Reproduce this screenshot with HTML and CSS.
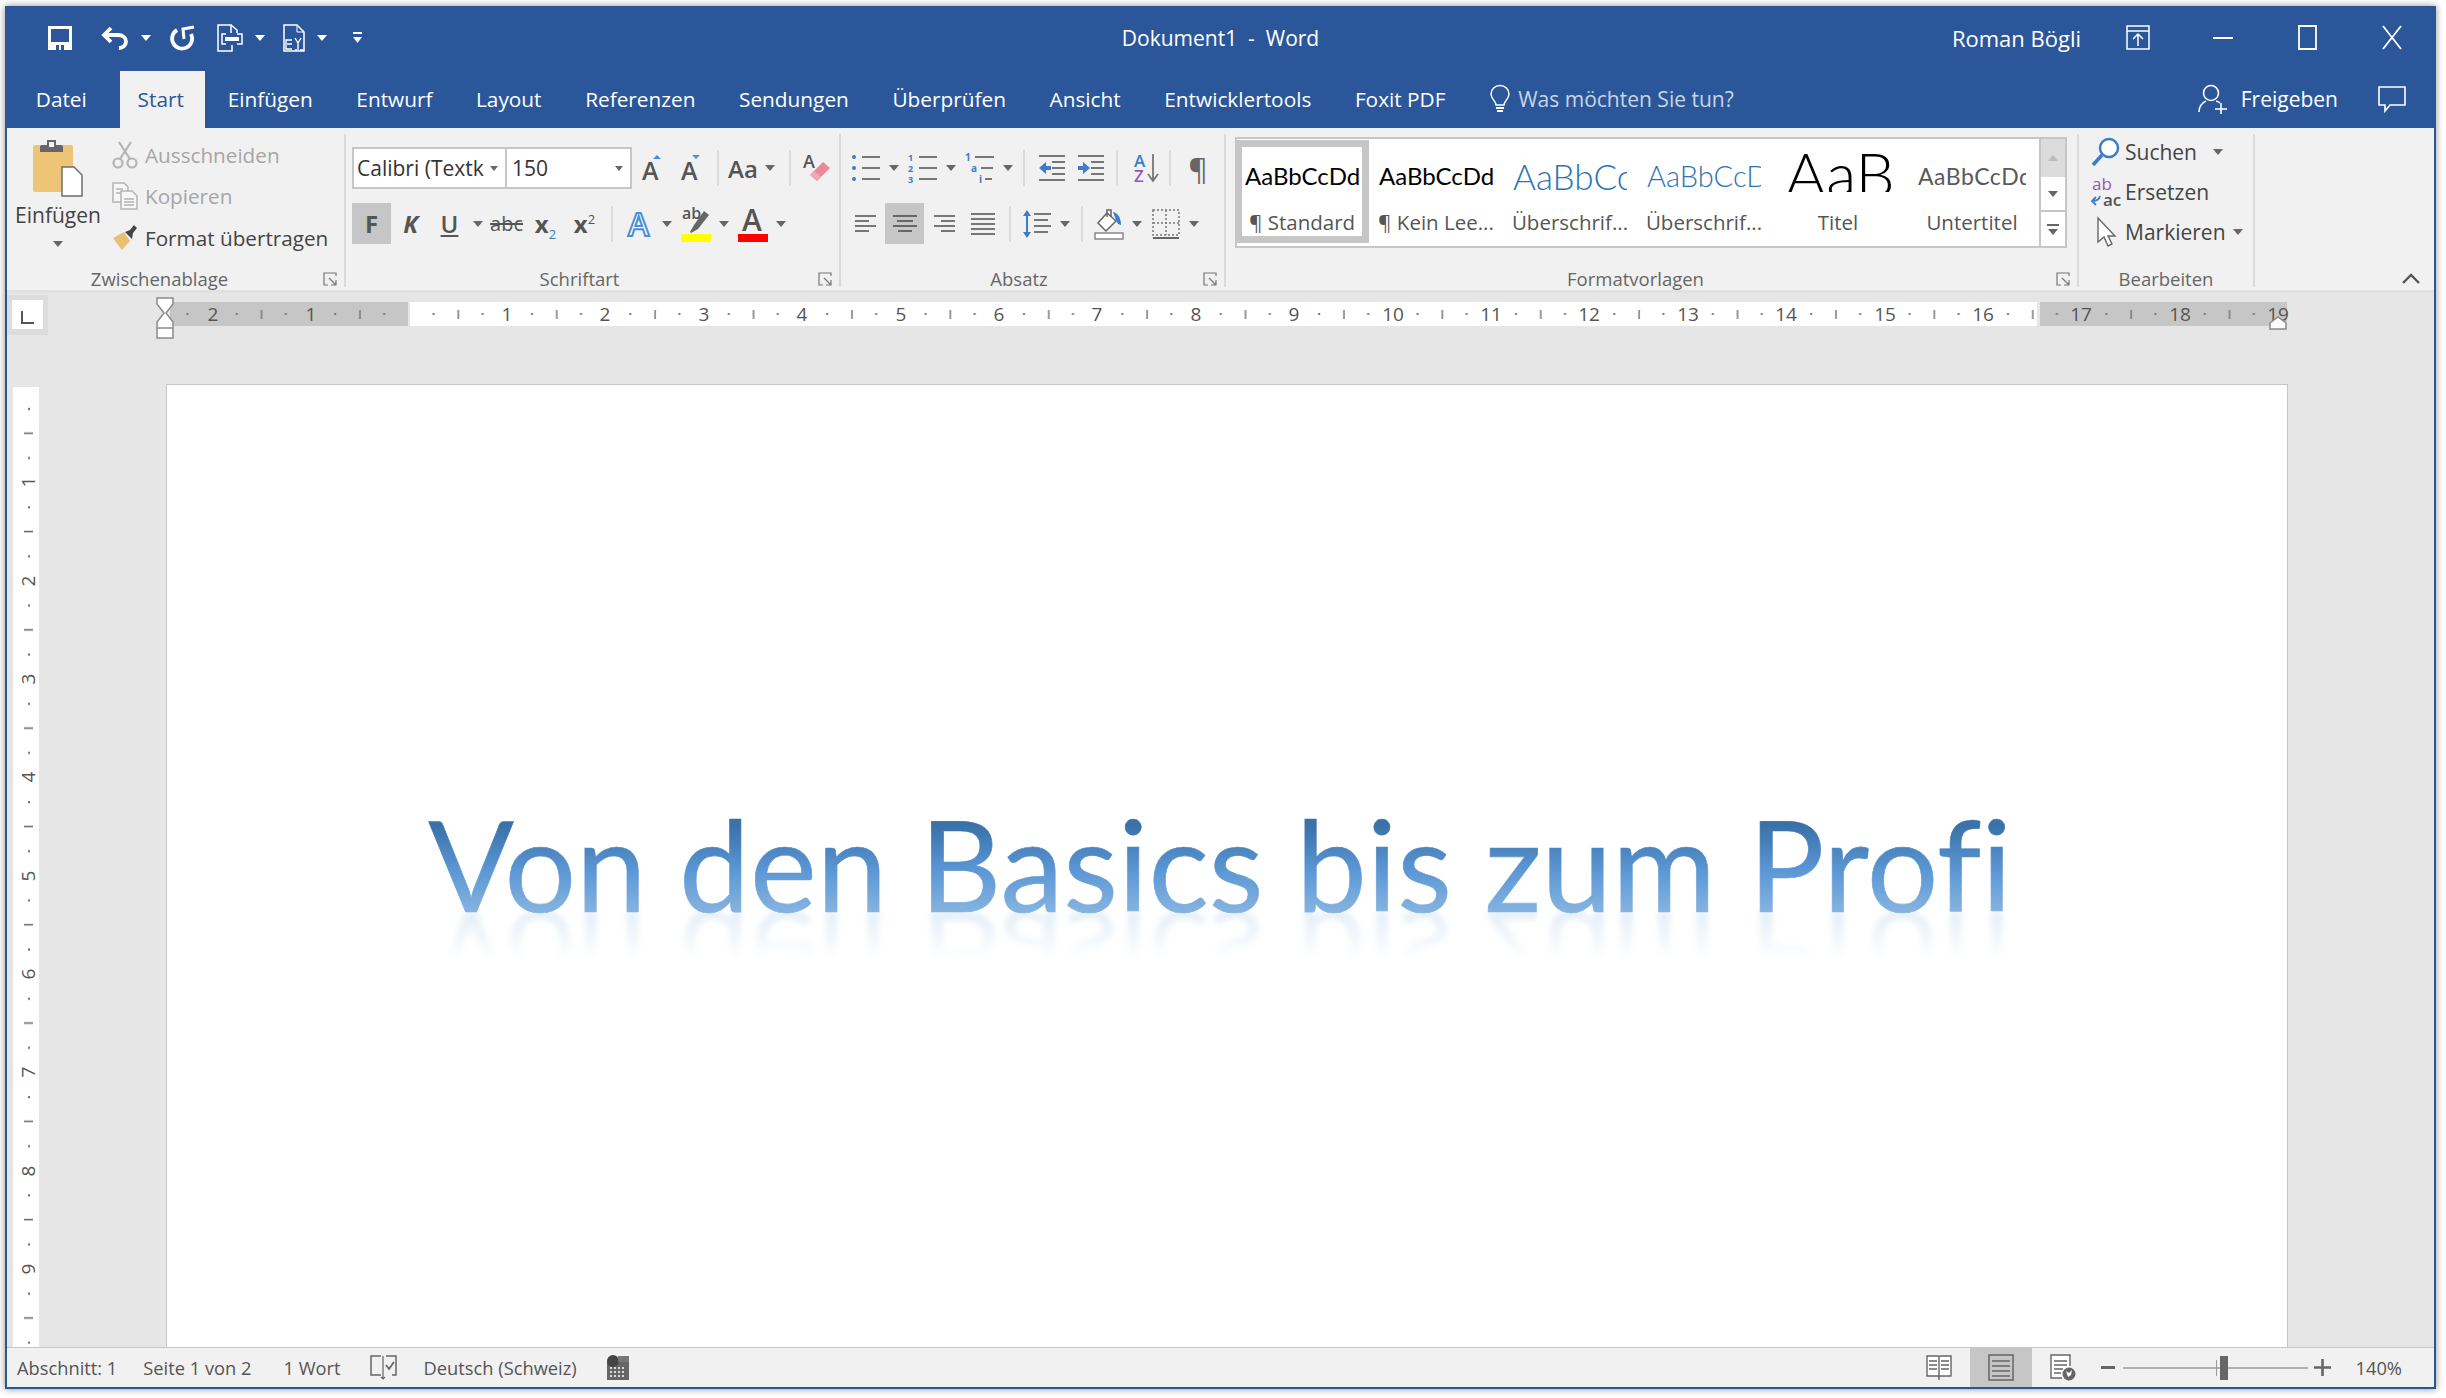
FILE: index.html
```html
<!DOCTYPE html>
<html lang="de">
<head>
  <meta charset="UTF-8">
  <title>Dokument1 - Word</title>
  <link rel="stylesheet" href="styles.css">
</head>
<body>
<div class="window">

  <!-- Titelleiste -->
  <header class="titlebar">
    <div class="qat">
      <svg class="q-save" width="24" height="24" viewBox="0 0 24 24"><path d="M0 0h24v24H0z" fill="#fff"/><path d="M3 3h18v13H3z" fill="#2b579a"/><path d="M8 19h3v5H8zM13 19h3v5h-3z" fill="#2b579a"/></svg>
      <svg class="q-undo" width="27" height="24" viewBox="0 0 27 24"><path d="M9 2 2 9l7 7M3 9h13c5 0 8 3 8 6.500S21 22 17 22" fill="none" stroke="#fff" stroke-width="3.800"/></svg>
      <span class="drop white"></span>
      <svg class="q-redo" width="26" height="25" viewBox="0 0 26 25"><path d="M8 5A10 10 0 1 0 22 9" fill="none" stroke="#fff" stroke-width="3.800"/><path d="M25 2 14 4l1 10" fill="none" stroke="#fff" stroke-width="3"/></svg>
      <svg class="q-touch" width="26" height="28" viewBox="0 0 26 28"><path d="M14 9V1H1v26h14v-6" fill="none" stroke="#fff" stroke-width="1.500"/><path d="M14 1l6 5v3" fill="none" stroke="#fff" stroke-width="1.500"/><path d="M9 10H5v10h4M20 10h5v10h-5" fill="none" stroke="#fff" stroke-width="1.500"/><rect x="8" y="13" width="14" height="4" fill="#fff"/></svg>
      <span class="drop white"></span>
      <svg class="q-doc" width="22" height="28" viewBox="0 0 22 28"><path d="M1 1h13l7 7v19H1z" fill="none" stroke="#fff" stroke-width="1.500"/><path d="M14 1v7h7" fill="none" stroke="#fff"/><path d="M9 16H3v9h6M4 20h5M12 14l3 5 3-5M15 19v7M12 26h2M17 26h3" fill="none" stroke="#fff" stroke-width="1.400"/></svg>
      <span class="drop white"></span>
      <svg class="q-more" width="12" height="12" viewBox="0 0 12 12"><path d="M1 1h9" stroke="#fff" stroke-width="2"/><path d="M1 5h9l-4.500 6z" fill="#fff"/></svg>
    </div>
    <div class="doc-title">Dokument1&nbsp; -&nbsp; Word</div>
    <div class="win-right">
      <span class="user">Roman Bögli</span>
      <button class="win-btn"><svg width="24" height="25" viewBox="0 0 24 25"><path d="M1 1h22v23H1z" fill="none" stroke="#fff" stroke-width="1.500"/><path d="M1 6h22" stroke="#fff" stroke-width="1.500"/><path d="M12 21V10M7 14l5-5 5 5" fill="none" stroke="#fff" stroke-width="1.500"/></svg></button>
      <button class="win-btn"><svg width="20" height="2" viewBox="0 0 20 2"><path d="M0 1h20" stroke="#fff" stroke-width="2"/></svg></button>
      <button class="win-btn"><svg width="19" height="25" viewBox="0 0 19 25"><path d="M1 1h17v23H1z" fill="none" stroke="#fff" stroke-width="1.800"/></svg></button>
      <button class="win-btn"><svg width="20" height="25" viewBox="0 0 20 25"><path d="M1 1l18 23M19 1 1 24" stroke="#fff" stroke-width="1.800"/></svg></button>
    </div>
  </header>

  <!-- Registerkarten -->
  <nav class="tabs">
    <a class="tab tab-file">Datei</a>
    <a class="tab active">Start</a>
    <a class="tab">Einfügen</a>
    <a class="tab">Entwurf</a>
    <a class="tab">Layout</a>
    <a class="tab">Referenzen</a>
    <a class="tab">Sendungen</a>
    <a class="tab">Überprüfen</a>
    <a class="tab">Ansicht</a>
    <a class="tab">Entwicklertools</a>
    <a class="tab">Foxit PDF</a>
    <div class="tell-me">
      <svg width="20" height="28" viewBox="0 0 20 28"><path d="M6 20c0-4-5-6-5-11a9 8.500 0 0 1 18 0c0 5-5 7-5 11z" fill="none" stroke="#fff" stroke-width="1.500"/><path d="M6 23h8M7 26h6" stroke="#fff" stroke-width="2"/></svg>
      <span>Was möchten Sie tun?</span>
    </div>
    <div class="share">
      <svg width="30" height="30" viewBox="0 0 30 30"><circle cx="13" cy="9" r="7.500" fill="none" stroke="#fff" stroke-width="1.600"/><path d="M1 28c0-6 3-9 7-11M18 17c2 .5 3 1 4 2M23 19v11M17 25h12" fill="none" stroke="#fff" stroke-width="1.600"/></svg>
      <span>Freigeben</span>
      <svg class="comment" width="28" height="26" viewBox="0 0 28 26"><path d="M1 1h26v18H12l-5 6v-6H1z" fill="none" stroke="#fff" stroke-width="1.600"/></svg>
    </div>
  </nav>

  <!-- Menüband -->
  <section class="ribbon">

    <div class="group g-clip">
      <div class="clip-body">
        <div class="paste">
          <svg width="50" height="57" viewBox="0 0 50 57"><rect x="0" y="5" width="40" height="47" rx="2" fill="#eec576"/><path d="M7 12V7q0-2 2-2h5V0h9v5h5q2 0 2 2v5z" fill="#666"/><rect x="16" y="2" width="5" height="5" fill="#f1f1f1"/><path d="M29 27h12l8 8v21H29z" fill="#fff" stroke="#6e6e6e" stroke-width="1.500"/></svg>
          <span class="paste-label">Einfügen</span>
          <span class="drop"></span>
        </div>
        <div class="clip-list">
          <div class="clip-row off">
            <svg width="26" height="28" viewBox="0 0 26 28"><g fill="none" stroke="#b4b4b4" stroke-width="2.200"><circle cx="6" cy="22" r="4.500"/><circle cx="20" cy="22" r="4.500"/><path d="M8 18 19 1M18 18 7 1"/></g></svg>
            <span>Ausschneiden</span>
          </div>
          <div class="clip-row off">
            <svg width="26" height="28" viewBox="0 0 26 28"><g fill="#f7f7f7" stroke="#b4b4b4" stroke-width="1.500"><path d="M1 1h11l4 4v15H1z"/><path d="M9 9h11l5 5v13H9z"/><path d="M4 7h7M4 11h4M12 17h10M12 20h10M12 23h10"/></g></svg>
            <span>Kopieren</span>
          </div>
          <div class="clip-row">
            <svg width="26" height="28" viewBox="0 0 26 28"><path d="M1 14 12 8l6 9-8 9q-5-6-9-12" fill="#e9bf75"/><path d="m13 8 5-2 4-5 3 3-4 5-1 6z" fill="#444"/></svg>
            <span>Format übertragen</span>
          </div>
        </div>
      </div>
      <div class="group-label">Zwischenablage</div>
      <svg class="launcher" width="14" height="14" viewBox="0 0 14 14"><path d="M13 4V1H1v12h4M6 6l7 7M13 8v5H8" fill="none" stroke="#777" stroke-width="1.200"/></svg>
    </div>

    <div class="group g-font">
      <div class="row first">
        <div class="combo">
          <div class="combo-name"><span>Calibri (Textk</span><i class="drop small"></i></div>
          <div class="combo-size"><span>150</span><i class="drop small"></i></div>
        </div>
        <button class="btn grow"><svg width="24" height="26" viewBox="0 0 24 26"><text x="0" y="25" class="ico-text" font-size="25">A</text><path d="M11 4l4-4 4 4z" fill="#4a8fd6"/></svg></button>
        <button class="btn grow"><svg width="24" height="26" viewBox="0 0 24 26"><text x="0" y="25" class="ico-text" font-size="25">A</text><path d="M11 0h8l-4 4z" fill="#4a8fd6"/></svg></button>
        <span class="sep"></span>
        <button class="btn case">Aa</button><span class="drop"></span>
        <span class="sep"></span>
        <button class="btn"><svg width="28" height="30" viewBox="0 0 28 30"><text x="0" y="15" class="ico-text" font-size="18">A</text><path d="m7 22 13-13 7 6-13 13z" fill="#e98a9c"/><path d="m7 22 4-4 7 6-4 4z" fill="#f0a8b6"/></svg></button>
      </div>
      <div class="row">
        <button class="btn on fmt-bold">F</button>
        <button class="btn fmt-italic">K</button>
        <button class="btn fmt-under">U</button><span class="drop"></span>
        <button class="btn fmt-strike">abc</button>
        <button class="btn fmt-sub"><span>x<sub>2</sub></span></button>
        <button class="btn fmt-sup"><span>x<sup>2</sup></span></button>
        <span class="sep"></span>
        <button class="btn"><svg width="26" height="28" viewBox="0 0 26 28"><text x="2" y="26" font-size="32" class="ico-effect">A</text></svg></button><span class="drop"></span>
        <button class="btn"><svg width="30" height="36" viewBox="0 0 30 36"><text x="1" y="13" class="ico-text" font-size="16">ab</text><path d="m9 26 4-7 10-14 5 4-11 14-7 4z" fill="#666"/><rect y="28" width="30" height="8" fill="#ffff00"/></svg></button><span class="drop"></span>
        <button class="btn"><svg width="30" height="36" viewBox="0 0 30 36"><text x="4" y="25" class="ico-text" font-size="30">A</text><rect y="28" width="30" height="8" fill="#f00"/></svg></button><span class="drop"></span>
      </div>
      <div class="group-label">Schriftart</div>
      <svg class="launcher" width="14" height="14" viewBox="0 0 14 14"><path d="M13 4V1H1v12h4M6 6l7 7M13 8v5H8" fill="none" stroke="#777" stroke-width="1.200"/></svg>
    </div>

    <div class="group g-para">
      <div class="row first">
        <button class="btn"><svg width="30" height="28" viewBox="0 0 30 28"><g fill="#3d7cc9"><circle cx="3" cy="3" r="2"/><circle cx="3" cy="14" r="2"/><circle cx="3" cy="25" r="2"/></g><path d="M11 3h18M11 14h18M11 25h18" stroke="#777" stroke-width="2"/></svg></button><span class="drop"></span>
        <button class="btn"><svg width="30" height="30" viewBox="0 0 30 30"><g class="ico-num" font-size="9"><text x="0" y="8">1</text><text x="0" y="19">2</text><text x="0" y="30">3</text></g><path d="M11 4h18M11 15h18M11 26h18" stroke="#777" stroke-width="2"/></svg></button><span class="drop"></span>
        <button class="btn"><svg width="30" height="30" viewBox="0 0 30 30"><g class="ico-num" font-size="10"><text x="0" y="8">1</text><text x="6" y="19">a</text><text x="14" y="30">i</text></g><path d="M10 4h19M16 15h12M20 26h7" stroke="#777" stroke-width="2"/></svg></button><span class="drop"></span>
        <span class="sep"></span>
        <button class="btn"><svg width="28" height="26" viewBox="0 0 28 26"><path d="M1 1h26M14 7h13M14 13h13M14 19h13M1 25h26" stroke="#777" stroke-width="2"/><path d="M1 13l7-6v4h5v4H8v4z" fill="#3d7cc9"/></svg></button>
        <button class="btn"><svg width="28" height="26" viewBox="0 0 28 26"><path d="M1 1h26M14 7h13M14 13h13M14 19h13M1 25h26" stroke="#777" stroke-width="2"/><path d="M13 13 6 7v4H1v4h5v4z" fill="#3d7cc9"/></svg></button>
        <span class="sep"></span>
        <button class="btn sort"><svg width="26" height="30" viewBox="0 0 26 30"><text x="0" y="14" font-size="17" class="ico-az a">A</text><text x="0" y="29" font-size="17" class="ico-az z">Z</text><path d="M19 1v26M14 21l5 7 5-7" fill="none" stroke="#777" stroke-width="1.800"/></svg></button>
        <span class="sep tight"></span>
        <button class="btn pilcrow">¶</button>
      </div>
      <div class="row">
        <button class="btn"><svg width="22" height="20" viewBox="0 0 22 20"><path d="M0 2h21M0 7h14M0 12h21M0 17h14" stroke="#777" stroke-width="2"/></svg></button>
        <button class="btn on"><svg width="24" height="20" viewBox="0 0 24 20"><path d="M0 2h24M4 7h16M0 12h24M5 17h14" stroke="#666" stroke-width="2"/></svg></button>
        <button class="btn"><svg width="22" height="20" viewBox="0 0 22 20"><path d="M1 2h21M8 7h14M1 12h21M8 17h14" stroke="#777" stroke-width="2"/></svg></button>
        <button class="btn"><svg width="24" height="24" viewBox="0 0 24 24"><path d="M0 2h24M0 7h24M0 12h24M0 17h24M0 22h24" stroke="#777" stroke-width="2"/></svg></button>
        <span class="sep"></span>
        <button class="btn"><svg width="28" height="30" viewBox="0 0 28 30"><path d="M11 5h17M11 11h14M11 17h17M11 23h14" stroke="#777" stroke-width="2"/><path d="M4 1 0 7h3v16H0l4 6 4-6H5V7h3z" fill="#3d7cc9"/></svg></button><span class="drop"></span>
        <span class="sep"></span>
        <button class="btn"><svg width="30" height="32" viewBox="0 0 30 32"><path d="M13 5 4 15l8 8 10-10z" fill="#fff" stroke="#666" stroke-width="1.500"/><path d="M13 9V2h4v7" fill="none" stroke="#666" stroke-width="1.500"/><path d="M19 4c5 1 8 6 8 13l-3-1-2-4z" fill="#3d7cc9"/><rect x="1" y="25" width="28" height="6" fill="#fff" stroke="#888" stroke-width="1.500"/></svg></button><span class="drop"></span>
        <button class="btn"><svg width="28" height="30" viewBox="0 0 28 30"><path d="M1 1h26v25H1zM14 1v25M1 14h26" fill="none" stroke="#777" stroke-width="1.500" stroke-dasharray="2 2"/><path d="M1 29h26" stroke="#666" stroke-width="2"/></svg></button><span class="drop"></span>
      </div>
      <div class="group-label">Absatz</div>
      <svg class="launcher" width="14" height="14" viewBox="0 0 14 14"><path d="M13 4V1H1v12h4M6 6l7 7M13 8v5H8" fill="none" stroke="#777" stroke-width="1.200"/></svg>
    </div>

    <div class="group g-styles">
      <div class="gallery">
        <div class="gallery-items">
          <div class="style-item selected"><div class="preview">AaBbCcDd</div><div class="style-name">¶ Standard</div></div>
          <div class="style-item"><div class="preview">AaBbCcDd</div><div class="style-name">¶ Kein Lee...</div></div>
          <div class="style-item"><div class="preview h1">AaBbCcDd</div><div class="style-name">Überschrif...</div></div>
          <div class="style-item"><div class="preview h2">AaBbCcDd</div><div class="style-name">Überschrif...</div></div>
          <div class="style-item"><div class="preview title">AaB</div><div class="style-name">Titel</div></div>
          <div class="style-item"><div class="preview sub">AaBbCcDd</div><div class="style-name">Untertitel</div></div>
        </div>
        <div class="gallery-scroll">
          <div class="scroll-cell up"><i class="caret-up"></i></div>
          <div class="scroll-cell down"><i class="caret-down"></i></div>
          <div class="scroll-cell more"><b></b><i class="caret-down"></i></div>
        </div>
      </div>
      <div class="group-label">Formatvorlagen</div>
      <svg class="launcher" width="14" height="14" viewBox="0 0 14 14"><path d="M13 4V1H1v12h4M6 6l7 7M13 8v5H8" fill="none" stroke="#777" stroke-width="1.200"/></svg>
    </div>

    <div class="group g-edit">
      <div class="edit-list">
        <div class="edit-row">
          <svg width="29" height="30" viewBox="0 0 29 30"><circle cx="18" cy="11" r="9" fill="#fff" stroke="#3d7cc9" stroke-width="2.500"/><path d="M11 18 2 28" stroke="#3d7cc9" stroke-width="3.500"/></svg>
          <span>Suchen</span><span class="drop edit-drop"></span>
        </div>
        <div class="edit-row">
          <svg width="29" height="32" viewBox="0 0 29 32"><text x="1" y="14" font-size="17" class="ico-ab">ab</text><text x="12" y="30" font-size="17" class="ico-text">ac</text><path d="M9 20c-1 4-3 5-7 5M5 21l-4 4 4 4" fill="none" stroke="#3d7cc9" stroke-width="1.800"/></svg>
          <span>Ersetzen</span>
        </div>
        <div class="edit-row">
          <svg width="29" height="30" viewBox="0 0 29 30"><path d="M7 1v24l6-5 4 9 4-2-4-8h7z" fill="#fff" stroke="#666" stroke-width="1.400"/></svg>
          <span>Markieren</span><span class="drop mark-drop"></span>
        </div>
      </div>
      <div class="group-label">Bearbeiten</div>
    </div>

    <svg class="collapse" width="18" height="11" viewBox="0 0 18 11"><path d="m1 10 8-8 8 8" fill="none" stroke="#555" stroke-width="2.400"/></svg>
  </section>

  <!-- Arbeitsbereich -->
  <main class="docarea">
    <div class="hruler-row">
      <div class="corner"><span></span></div>
      <svg class="hruler" width="2386" height="91" viewBox="48 293 2386 91">
        <defs>
          <pattern id="hticks" x="408.600" y="302" width="98.400" height="24" patternUnits="userSpaceOnUse">
            <rect x="24" y="11" width="2" height="2" fill="#777"/>
            <rect x="49" y="8" width="1.500" height="9" fill="#777"/>
            <rect x="73" y="11" width="2" height="2" fill="#777"/>
          </pattern>
        </defs>
        <rect x="170" y="302" width="238" height="24" fill="#c6c6c6"/>
        <rect x="410" y="302" width="1627" height="24" fill="#fff"/>
        <rect x="2040" y="302" width="247" height="24" fill="#c6c6c6"/>
        <rect x="170" y="302" width="2117" height="24" fill="url(#hticks)"/>
        <g class="ruler-num">
          <text x="213" y="321">2</text><text x="311" y="321">1</text>
          <text x="507" y="321">1</text><text x="605" y="321">2</text><text x="704" y="321">3</text><text x="802" y="321">4</text>
          <text x="901" y="321">5</text><text x="999" y="321">6</text><text x="1097" y="321">7</text><text x="1196" y="321">8</text>
          <text x="1294" y="321">9</text><text x="1393" y="321">10</text><text x="1491" y="321">11</text><text x="1589" y="321">12</text>
          <text x="1688" y="321">13</text><text x="1786" y="321">14</text><text x="1885" y="321">15</text><text x="1983" y="321">16</text>
          <text x="2081" y="321">17</text><text x="2180" y="321">18</text><text x="2278" y="321">19</text>
        </g>
        <path d="M157 298h16v6l-7 9 7 9v16h-16v-16l7-9-7-9z" fill="#fff" stroke="#8a8a8a" stroke-width="1.500"/>
        <path d="M157 328h16" stroke="#8a8a8a" stroke-width="1.500"/>
        <path d="M2270 329v-6l8-6 8 6v6z" fill="#fff" stroke="#8a8a8a" stroke-width="1.500"/>
      </svg>
    </div>
    <div class="docbody">
      <svg class="vruler" width="26" height="964" viewBox="13 384 26 964">
        <defs>
          <pattern id="vticks" x="13" y="384" width="26" height="98.300" patternUnits="userSpaceOnUse">
            <rect x="15" y="24" width="2" height="2" fill="#666"/>
            <rect x="11" y="48.500" width="9" height="1.500" fill="#666"/>
            <rect x="15" y="73" width="2" height="2" fill="#666"/>
          </pattern>
        </defs>
        <rect x="13" y="387" width="26" height="961" fill="#fff"/>
        <rect x="13" y="387" width="26" height="961" fill="url(#vticks)"/>
        <g class="ruler-num">
          <text transform="translate(35 482) rotate(-90)">1</text><text transform="translate(35 581) rotate(-90)">2</text>
          <text transform="translate(35 679) rotate(-90)">3</text><text transform="translate(35 777) rotate(-90)">4</text>
          <text transform="translate(35 876) rotate(-90)">5</text><text transform="translate(35 974) rotate(-90)">6</text>
          <text transform="translate(35 1072) rotate(-90)">7</text><text transform="translate(35 1171) rotate(-90)">8</text>
          <text transform="translate(35 1269) rotate(-90)">9</text>
        </g>
      </svg>
      <article class="page">
        <h1 class="wordart" data-text="Von den Basics bis zum Profi">Von den Basics bis zum Profi</h1>
      </article>
    </div>
  </main>

  <!-- Statusleiste -->
  <footer class="status">
    <span class="st-section">Abschnitt: 1</span>
    <span class="st-page">Seite 1 von 2</span>
    <span class="st-words">1 Wort</span>
    <svg class="st-proof" width="27" height="25" viewBox="0 0 27 25"><path d="M11 1H1v19h10M16 1h10v19h-4" fill="none" stroke="#666" stroke-width="1.500"/><path d="M13 1v22M11 22l2 2 2-2" fill="none" stroke="#666" stroke-width="1.200"/><path d="m16 10 3 4 5-7" fill="none" stroke="#666" stroke-width="1.800"/></svg>
    <span class="st-lang">Deutsch (Schweiz)</span>
    <svg class="st-key" width="23" height="25" viewBox="0 0 23 25"><rect y="7" width="22" height="18" fill="#666"/><circle cx="6" cy="6" r="6" fill="#444"/><rect x="11" y="1" width="11" height="6" fill="#777"/><path d="M3 13h16M3 17h16M3 21h16" stroke="#fff" stroke-width="1.500" stroke-dasharray="2 2"/></svg>
    <div class="st-right">
      <button class="view-btn"><svg width="26" height="27" viewBox="0 0 26 27"><path d="M1 2h11l1 1 1-1h11v20H14l-1 1-1-1H1zM13 3v23" fill="#fff" stroke="#666" stroke-width="1.400"/><path d="M3 7h8M3 11h8M3 15h8M15 7h8M15 11h8M15 15h8" stroke="#666" stroke-width="1.400"/></svg></button>
      <button class="view-btn on"><svg width="26" height="27" viewBox="0 0 26 27"><rect x="1" y="1" width="24" height="25" fill="none" stroke="#666" stroke-width="1.500"/><path d="M4 7h18M4 12h18M4 17h18M4 22h18" stroke="#666" stroke-width="1.500"/></svg></button>
      <button class="view-btn"><svg width="26" height="27" viewBox="0 0 26 27"><path d="M20 12V1H1v23h11" fill="#fff" stroke="#666" stroke-width="1.400"/><path d="M4 7h13M4 11h13M4 15h9M4 19h7" stroke="#666" stroke-width="1.400"/><circle cx="19" cy="20" r="6.500" fill="#666"/><path d="m16 17 3 2 3-3-1 5-3 2z" fill="#fff"/></svg></button>
      <button class="zoom-btn"><svg width="14" height="3" viewBox="0 0 14 3"><path d="M0 1.500h14" stroke="#666" stroke-width="3"/></svg></button>
      <div class="slider"><i class="slider-mid"></i><i class="slider-thumb"></i></div>
      <button class="zoom-btn"><svg width="17" height="17" viewBox="0 0 17 17"><path d="M0 8.500h17M8.500 0v17" stroke="#666" stroke-width="2.600"/></svg></button>
      <span class="zoom-pct">140%</span>
    </div>
  </footer>
</div>
</body>
</html>
```

FILE: styles.css
```css
* {
  box-sizing: border-box;
}

html, body {
  margin: 0;
  height: 100%;
  background: #fff;
  overflow: hidden;
}

body {
  font-family: "Open Sans", "Liberation Sans", sans-serif;
  font-size: 21px;
  color: #444;
}

svg {
  overflow: visible;
}

button {
  border: 0;
  background: none;
  padding: 0;
  font: inherit;
  color: inherit;
  display: flex;
  align-items: center;
  justify-content: center;
}

.window {
  width: 2431px;
  height: 1383px;
  margin: 6px 0 0 5px;
  display: flex;
  flex-direction: column;
  border: 2px solid #2b579a;
  border-top: 0;
  box-shadow: 0 0 7px rgba(0, 0, 0, .45);
  background: #f1f1f1;
  overflow: hidden;
}

/* Titelleiste */
.titlebar {
  height: 65px;
  background: #2b579a;
  color: #fff;
  display: grid;
  grid-template-columns: 1fr auto 1fr;
  align-items: center;
  padding-bottom: 2px;
}

.qat {
  display: flex;
  align-items: center;
  padding-left: 41px;
}

.q-undo { margin-left: 30px; }
.q-redo { margin-left: 17px; }
.q-touch { margin-left: 22px; }
.q-doc { margin-left: 16px; }
.q-more { margin-left: 24px; }
.qat .drop { width: 12px; margin-left: 11px; }
.qat .drop + .q-doc { margin-left: 17px; }

.win-right {
  display: flex;
  justify-content: flex-end;
  align-items: center;
}

.user {
  font-size: 22px;
  margin-right: 15px;
}

.win-btn {
  width: 84.500px;
  height: 50px;
}

/* Registerkarten */
.tabs {
  height: 57px;
  background: #2b579a;
  color: #fff;
  display: flex;
  align-items: stretch;
  padding-left: 7px;
}

.tab {
  display: flex;
  align-items: center;
  padding: 0 21.800px 2px;
  font-size: 20.800px;
}

.tab-file {
  margin-right: 11px;
}

.tab.active {
  background: #f1f1f1;
  color: #2b579a;
  padding: 0 21px 2px 18px;
  margin-right: 1px;
}

.tell-me {
  display: flex;
  align-items: center;
  gap: 8px;
  margin-left: 23px;
  padding-bottom: 2px;
  color: #c9d4e6;
}

.share {
  margin-left: auto;
  display: flex;
  align-items: center;
  padding: 0 28px 2px 0;
}

.share span {
  margin-left: 13px;
}

.comment {
  margin-left: 40px;
}

/* Menüband */
.ribbon {
  height: 165px;
  flex: none;
  display: flex;
  position: relative;
  background: #f1f1f1;
  border-bottom: 3px solid #e1e1e1;
}

.group {
  height: 153px;
  margin-top: 6px;
  display: flex;
  flex-direction: column;
  position: relative;
  border-right: 2px solid #dadada;
}

.g-clip { width: 339px; }
.g-font { width: 495px; padding-left: 6px; }
.g-para { width: 385px; padding-left: 5px; }
.g-styles { width: 853px; padding: 3px 0 0 9px; }
.g-edit { width: 176px; }

.group-label {
  margin-top: auto;
  height: 20px;
  line-height: 24px;
  font-size: 18.500px;
  text-align: center;
  color: #666;
  padding-right: 32px;
}

.g-styles .group-label { margin-left: -9px; }
.g-edit .group-label { padding-right: 0; }

.launcher {
  position: absolute;
  right: 7px;
  bottom: 1px;
}

.drop {
  width: 18px;
  display: flex;
  align-items: center;
  justify-content: center;
  flex: none;
}

.drop::after {
  content: "";
  border-left: 5px solid transparent;
  border-right: 5px solid transparent;
  border-top: 6px solid #666;
}

.drop.white::after {
  border-top-color: #fff;
}

/* Zwischenablage */
.clip-body {
  display: flex;
}

.paste {
  width: 102px;
  display: flex;
  flex-direction: column;
  align-items: center;
  padding-top: 6px;
}

.paste-label {
  line-height: 28px;
  margin-top: 4px;
}

.paste .drop {
  height: 29px;
}

.clip-list {
  margin-left: 3px;
}

.clip-row {
  height: 41.500px;
  display: flex;
  align-items: center;
  gap: 7px;
  font-size: 20.700px;
}

.clip-row.off {
  color: #a6a6a6;
}

/* Schriftart und Absatz */
.row {
  display: flex;
  align-items: center;
  height: 41px;
  margin-top: 14px;
}

.row.first {
  margin-top: 13px;
  height: 42px;
}

.btn {
  width: 39px;
  height: 41px;
  flex: none;
}

.btn.on {
  background: #c6c6c6;
}

.btn.grow {
  padding-left: 4px;
}

.btn.sort, .btn.pilcrow {
  padding-left: 5px;
}

.sep {
  width: 2px;
  height: 36px;
  margin: 0 6px 0 7px;
  background: #dadada;
  flex: none;
}

.g-para .row.first .sep {
  margin: 0 7px 0 6px;
}

.g-para .row.first .sep.tight {
  margin: 0 5px;
}

.combo {
  display: flex;
  width: 280px;
  height: 42px;
  background: #fff;
  border: 2px solid #c6c6c6;
  color: #333;
}

.combo-name, .combo-size {
  display: flex;
  align-items: center;
}

.combo-name {
  width: 153px;
  padding-left: 3px;
  border-right: 2px solid #c6c6c6;
}

.combo-name span {
  width: 128px;
  white-space: nowrap;
}

.combo-size {
  flex: 1;
  padding-left: 5px;
  justify-content: space-between;
  padding-right: 2px;
}

.drop.small::after {
  border-left-width: 4px;
  border-right-width: 4px;
  border-top-width: 5px;
}

.ico-text {
  font-family: "Open Sans", sans-serif;
  font-weight: 600;
  fill: #555;
}

.ico-effect {
  font-family: "Open Sans", sans-serif;
  font-weight: 600;
  fill: #fff;
  stroke: #4a8fd6;
  stroke-width: 2;
}

.ico-num {
  font-family: "Open Sans", sans-serif;
  fill: #3d7cc9;
  font-weight: 700;
}

.ico-az {
  font-family: "Open Sans", sans-serif;
  font-weight: 600;
}

.ico-az.a { fill: #3d7cc9; }
.ico-az.z { fill: #8e5bb5; }

.ico-ab {
  font-family: "Open Sans", sans-serif;
  fill: #8e5bb5;
}

.case { font-size: 24px; font-weight: 600; color: #555; width: 36px; }
.case + .drop + .sep { margin-left: 10px; }
.fmt-bold { font-weight: 700; font-size: 24px; color: #555; }
.fmt-italic { font-weight: 700; font-style: italic; font-size: 24px; color: #555; }
.fmt-under { font-weight: 600; font-size: 24px; color: #555; text-decoration: underline; }
.fmt-strike { text-decoration: line-through; font-size: 20px; color: #555; }
.fmt-sub, .fmt-sup { font-weight: 700; font-size: 24px; color: #555; }
.fmt-sub sub { font-size: 13px; font-weight: 400; color: #3d7cc9; line-height: 0; }
.fmt-sup sup { font-size: 13px; font-weight: 400; line-height: 0; }
.pilcrow { font-size: 30px; color: #666; }

/* Formatvorlagen */
.gallery {
  display: flex;
  width: 832px;
  height: 111px;
  background: #fff;
  border: 2px solid #c6c6c6;
}

.gallery-items {
  display: flex;
  width: 804px;
  margin-left: -2px;
  padding-top: 1px;
}

.style-item {
  width: 134px;
  height: 103px;
  border: 7px solid #fff;
  display: flex;
  flex-direction: column;
  align-items: center;
}

.style-item.selected {
  border-color: #c6c6c6;
}

.preview {
  width: 114px;
  height: 61px;
  line-height: 58px;
  flex: none;
  overflow: hidden;
  white-space: nowrap;
  font-family: Lato, sans-serif;
  font-size: 24px;
  color: #000;
  text-align: center;
}

.preview.h1 { font-size: 35px; color: #2e74b5; font-weight: 300; text-align: left; }
.preview.h2 { font-size: 29px; color: #2e74b5; font-weight: 300; text-align: left; }
.preview.sub { width: 108px; font-size: 23px; color: #5a5a5a; letter-spacing: .5px; text-align: left; }
.preview.title {
  width: 105px;
  font-size: 62px;
  font-weight: 300;
  line-height: 53px;
  height: 45px;
  margin-bottom: 16px;
}

.style-name {
  font-size: 20.500px;
  line-height: 29px;
  white-space: nowrap;
  color: #555;
}

.gallery-scroll {
  flex: 1;
  display: flex;
  flex-direction: column;
  border-left: 2px solid #c6c6c6;
}

.scroll-cell {
  display: flex;
  flex-direction: column;
  align-items: center;
  justify-content: center;
  gap: 3px;
}

.scroll-cell.up { height: 38px; background: #dcdcdc; }
.scroll-cell.down { height: 35px; border-bottom: 2px solid #c6c6c6; }
.scroll-cell.more { flex: 1; }

.scroll-cell b {
  width: 12px;
  height: 2px;
  background: #666;
}

.caret-down, .caret-up {
  border-left: 5px solid transparent;
  border-right: 5px solid transparent;
}

.caret-down { border-top: 6px solid #666; }
.caret-up { border-bottom: 6px solid #bbb; }

/* Bearbeiten */
.edit-list {
  margin-top: -2px;
  padding-left: 12px;
}

.edit-row {
  height: 40px;
  display: flex;
  align-items: center;
  gap: 5px;
}

.edit-drop {
  margin-left: 7px;
}

.mark-drop {
  width: 14px;
}

.collapse {
  position: absolute;
  right: 14px;
  top: 145px;
}

/* Arbeitsbereich */
.docarea {
  flex: 1;
  min-height: 0;
  background: #e6e6e6;
  display: flex;
  flex-direction: column;
}

.hruler-row {
  height: 91px;
  flex: none;
  display: flex;
}

.corner {
  width: 41px;
  height: 40px;
  margin-top: 2px;
  background: #dcdcdc;
  padding: 5px;
}

.corner span {
  display: block;
  width: 31px;
  height: 29px;
  background: #fff;
  position: relative;
}

.corner span::after {
  content: "";
  position: absolute;
  left: 9px;
  top: 11px;
  width: 11px;
  height: 11px;
  border-left: 2px solid #555;
  border-bottom: 2px solid #555;
}

.hruler, .vruler {
  flex: none;
  display: block;
}

.ruler-num text {
  font-family: "Open Sans", sans-serif;
  font-size: 19px;
  fill: #555;
  text-anchor: middle;
}

.docbody {
  flex: 1;
  min-height: 0;
  display: flex;
  overflow: hidden;
  padding-left: 6px;
}

.vruler {
  margin-right: 127px;
}

.page {
  width: 2122px;
  height: 1400px;
  background: #fff;
  border: 1px solid #c6c6c6;
  padding: 403px 14px 0 0;
  text-align: center;
}

/* WordArt mit Verlauf und Spiegelung */
.wordart {
  position: relative;
  display: inline-block;
  margin: 0;
  font-family: Lato, sans-serif;
  font-weight: 400;
  font-size: 126.500px;
  line-height: 150px;
  white-space: nowrap;
  font-variant-ligatures: none;
  color: transparent;
  -webkit-text-stroke: .7px transparent;
  background: linear-gradient(#3a72a8 25%, #5b97d5 55%, #85b3e0 82%);
  -webkit-background-clip: text;
  background-clip: text;
}

.wordart::after {
  content: attr(data-text);
  position: absolute;
  left: 0;
  top: 97px;
  width: 100%;
  color: #7faedd;
  transform: scaleY(-1);
  filter: blur(3px);
  opacity: .22;
  -webkit-mask-image: linear-gradient(to top, #000 18%, transparent 50%);
  mask-image: linear-gradient(to top, #000 18%, transparent 50%);
}

/* Statusleiste */
.status {
  height: 40px;
  flex: none;
  display: flex;
  align-items: center;
  background: #f1f1f1;
  border-top: 1px solid #c6c6c6;
  padding-left: 10px;
  font-size: 18.300px;
  color: #555;
}

.st-page { margin-left: 26px; }
.st-words { margin-left: 32px; }
.st-proof { margin-left: 29px; }
.st-lang { margin-left: 27px; }
.st-key { margin-left: 30px; }

.st-right {
  margin-left: auto;
  display: flex;
  align-items: center;
  height: 100%;
  padding-right: 32px;
}

.view-btn {
  width: 62px;
  height: 100%;
}

.view-btn.on {
  background: #c6c6c6;
}

.zoom-btn {
  width: 29px;
  height: 100%;
}

.slider {
  position: relative;
  width: 185px;
  height: 2px;
  background: #b0b0b0;
}

.slider-mid {
  position: absolute;
  left: 93px;
  top: -7px;
  width: 1px;
  height: 16px;
  background: #999;
}

.slider-thumb {
  position: absolute;
  left: 97px;
  top: -11px;
  width: 8px;
  height: 24px;
  background: #666;
}

.zoom-pct {
  margin-left: 19px;
}
```
